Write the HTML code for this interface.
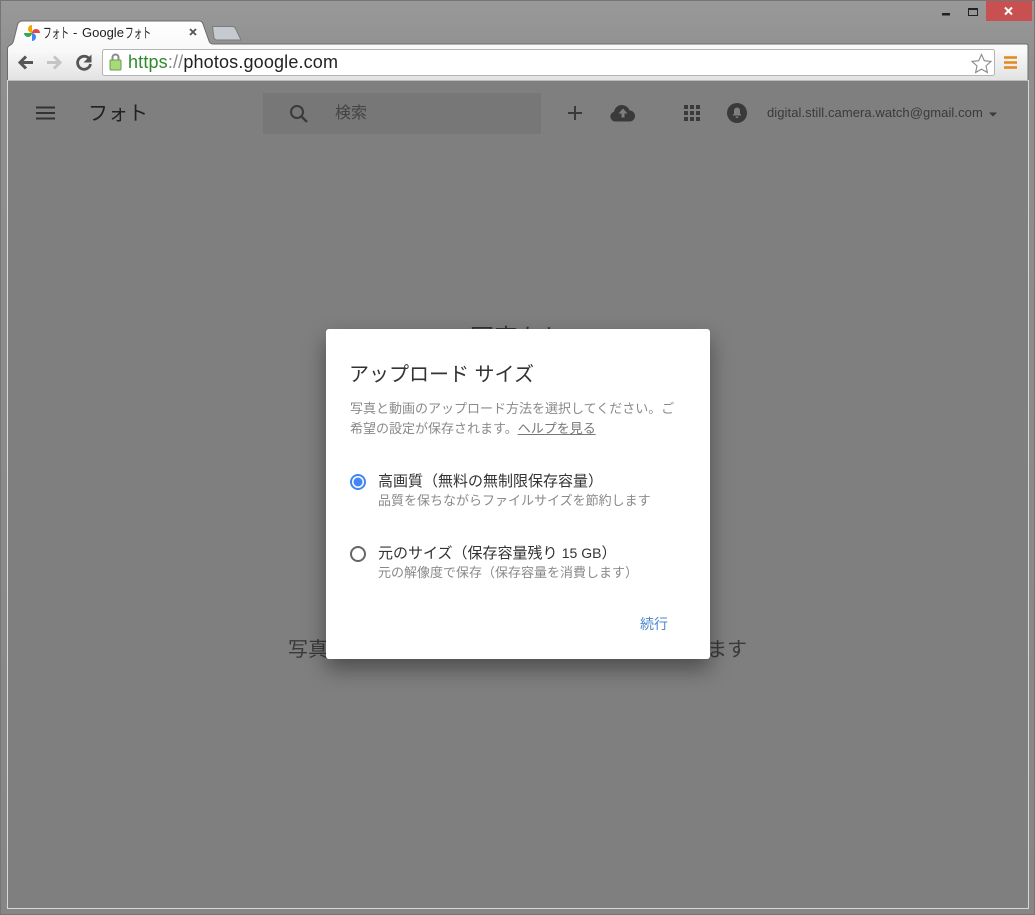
<!DOCTYPE html>
<html lang="ja"><head><meta charset="utf-8"><title>フォト - Google フォト</title>
<style>
html,body{margin:0;padding:0;width:1035px;height:915px;overflow:hidden;background:#8a8a8a}
*{box-sizing:border-box}
body{font-family:"Liberation Sans","Noto Sans CJK JP",sans-serif;position:relative}
.a{position:absolute;white-space:nowrap}
svg{position:absolute;overflow:visible}
</style></head><body>
<div class="a" style="left:0;top:0;width:1035px;height:915px;background:linear-gradient(#999 0,#8f8f8f 60px,#868686 100%);border:1px solid #757575"></div>

<svg style="left:0;top:0" width="1035" height="90">
<defs><linearGradient id="g" x1="0" y1="0" x2="0" y2="1"><stop offset="0" stop-color="#fff"/><stop offset=".5" stop-color="#f8f8f8"/><stop offset="1" stop-color="#e2e2e2"/></linearGradient></defs>
<!-- new tab -->
<path d="M212.500 26.500h20q2 0 3 2l5.500 11.500h-24q-2 0-3-2z" fill="#c5cad1" stroke="#7c7c7c"/>
<!-- tab + toolbar -->
<path d="M7.500 81V49q0-3 3-4 2-1 3-4l4-16q1-4 5-4H199q3 0 4 3l6 17q1 3 4 3H1026q2 0 2 2V81z" fill="url(#g)" stroke="#6c6c6c"/>
<!-- pinwheel -->
<path d="M32 33V25A4 4 0 0 0 32 33z" fill="#f4a300"/>
<path d="M32 33H40A4 4 0 0 0 32 33z" fill="#e8453c"/>
<path d="M32 33V41A4 4 0 0 0 32 33z" fill="#4285f4"/>
<path d="M32 33H24A4 4 0 0 0 32 33z" fill="#34a853"/>
<!-- close tab -->
<path d="M190 29l6 6M196 29l-6 6" stroke="#555" stroke-width="1.800"/>
<!-- back -->
<path d="M33 62.500H21M26 56.500l-6 6 6 6" fill="none" stroke="#555" stroke-width="3"/>
<!-- forward -->
<path d="M47 62.500h12M54 56.500l6 6-6 6" fill="none" stroke="#c4c4c4" stroke-width="3"/>
<!-- reload -->
<path d="M89 58.500a6.500 6.500 0 1 0 1.500 5.500" fill="none" stroke="#555" stroke-width="2.800"/>
<path d="M91.500 54.500v8h-8z" fill="#555"/>
<!-- address -->
<rect x="102.500" y="49.500" width="892" height="26" rx="2" fill="#fff" stroke="#b4b4b4"/>
<!-- lock -->
<path d="M112.500 60v-2.500a3 3 0 0 1 6 0V60" fill="none" stroke="#8a8a8a" stroke-width="2"/>
<rect x="110" y="60" width="11" height="10" rx="1" fill="#a6dc78" stroke="#6f9a50"/>
<!-- star -->
<path d="M981.500 54.500l2.800 6.200 6.700.7-5 4.500 1.400 6.600-5.900-3.400-5.900 3.400 1.400-6.600-5-4.500 6.700-.7z" fill="#fff" stroke="#8a8a8a" stroke-width="1.100"/>
<!-- menu -->
<path d="M1004 57.500h13M1004 62.500h13M1004 67.500h13" stroke="#e08a1e" stroke-width="2.600"/>
<!-- window buttons -->
<rect x="942" y="13" width="8" height="2.500" fill="#222"/>
<rect x="968.500" y="8.500" width="9" height="7" fill="none" stroke="#222"/><rect x="968" y="8" width="10" height="2" fill="#222"/>
<rect x="986" y="1" width="46" height="20" fill="#c85050"/>
<path d="M1005 7.500l7 7M1012 7.500l-7 7" stroke="#fff" stroke-width="2"/>
</svg>

<div class="a" style="left:43px;top:25px;font-size:14px;line-height:16px;color:#222;transform:scaleX(.62);transform-origin:left">フォト</div>
<div class="a" style="left:73px;top:25px;font-size:13px;line-height:16px;color:#222">-</div>
<div class="a" style="left:82px;top:25px;font-size:13px;line-height:16px;color:#222">Google</div>
<div class="a" style="left:125px;top:25px;font-size:14px;line-height:16px;color:#222;transform:scaleX(.62);transform-origin:left">フォト</div>
<div class="a" style="left:128px;top:52px;font-size:18px;line-height:20px;color:#222;letter-spacing:.16px"><span style="color:#2e8b2e">https</span><span style="color:#888">://</span>photos.google.com</div>

<!-- content -->
<div class="a" style="left:8px;top:81px;width:1020px;height:827px;background:#7f7f7f;box-shadow:0 0 0 1px #d8d8d8"></div>
<div class="a" style="left:8px;top:80px;width:1020px;height:1px;background:#bbb"></div>

<svg style="left:0;top:0" width="1035" height="140">
<path d="M36 107.500h19M36 113h19M36 118.500h19" stroke="#333" stroke-width="2"/>
<rect x="263" y="93" width="278" height="41" fill="#777"/>
<circle cx="297" cy="112" r="6" fill="none" stroke="#3a3a3a" stroke-width="2"/>
<path d="M301.500 116.500l5.500 5.500" stroke="#3a3a3a" stroke-width="2.400"/>
<path d="M575 106v14M568 113h14" stroke="#3a3a3a" stroke-width="2"/>
<path d="M615 121.500a5 5 0 0 1-1-9.800 8 8 0 0 1 15.500-1.200 5.500 5.500 0 0 1 0 11z" fill="#3a3a3a"/>
<path d="M623 108.500l-4.500 5h3v4h3v-4h3z" fill="#7f7f7f"/>
<path d="M684 105h4v4h-4zM690 105h4v4h-4zM696 105h4v4h-4zM684 111h4v4h-4zM690 111h4v4h-4zM696 111h4v4h-4zM684 117h4v4h-4zM690 117h4v4h-4zM696 117h4v4h-4z" fill="#3a3a3a"/>
<circle cx="737" cy="113" r="10" fill="#3a3a3a"/>
<path d="M737 107.500a3 3 0 0 1 3 3v3l1.500 2h-9l1.500-2v-3a3 3 0 0 1 3-3zM735.500 116.500h3a1.500 1.500 0 0 1-3 0z" fill="#7f7f7f"/>
<path d="M989 112.500h8l-4 4z" fill="#3a3a3a"/>
</svg>
<div class="a" style="left:88px;top:100px;font-size:20px;line-height:28px;color:#222">フォト</div>
<div class="a" style="left:335px;top:104px;font-size:16px;line-height:20px;color:#444">検索</div>
<div class="a" style="left:767px;top:105px;font-size:13px;line-height:16px;color:#3a3a3a;letter-spacing:.07px">digital.still.camera.watch@gmail.com</div>

<div class="a" style="left:470px;top:323px;font-size:24px;line-height:32px;color:#333">写真なし</div>
<div class="a" style="left:288px;top:637px;font-size:20px;line-height:26px;color:#3a3a3a">写真を追加</div>
<div class="a" style="left:707px;top:637px;font-size:20px;line-height:26px;color:#3a3a3a">ます</div>

<!-- dialog -->
<div class="a" style="left:326px;top:329px;width:384px;height:330px;background:#fff;border-radius:3px;box-shadow:0 10px 22px rgba(0,0,0,.4)"></div>
<div class="a" style="left:349px;top:361px;font-size:20px;line-height:28px;color:#333">アップロード サイズ</div>
<div class="a" style="left:350px;top:399px;font-size:13px;line-height:20px;color:#8a8a8a">写真と動画のアップロード方法を選択してください。ご<br>希望の設定が保存されます。<span style="text-decoration:underline;color:#777">ヘルプを見る</span></div>

<svg style="left:0;top:0" width="1035" height="600">
<circle cx="358" cy="482" r="7" fill="none" stroke="#4285f4" stroke-width="2"/>
<circle cx="358" cy="482" r="4.500" fill="#4285f4"/>
<circle cx="358" cy="554" r="7" fill="none" stroke="#666" stroke-width="2"/>
</svg>
<div class="a" style="left:378px;top:472px;font-size:15px;line-height:20px;color:#333">高画質（無料の無制限保存容量）</div>
<div class="a" style="left:378px;top:491px;font-size:13px;line-height:20px;color:#8a8a8a">品質を保ちながらファイルサイズを節約します</div>
<div class="a" style="left:378px;top:543px;font-size:15px;line-height:20px;color:#333">元のサイズ（保存容量残り <span style="font-size:14px">15 GB</span>）</div>
<div class="a" style="left:378px;top:563px;font-size:13px;line-height:20px;color:#8a8a8a">元の解像度で保存（保存容量を消費します）</div>
<div class="a" style="left:640px;top:614px;font-size:14px;line-height:20px;color:#4a86d0">続行</div>
</body></html>
